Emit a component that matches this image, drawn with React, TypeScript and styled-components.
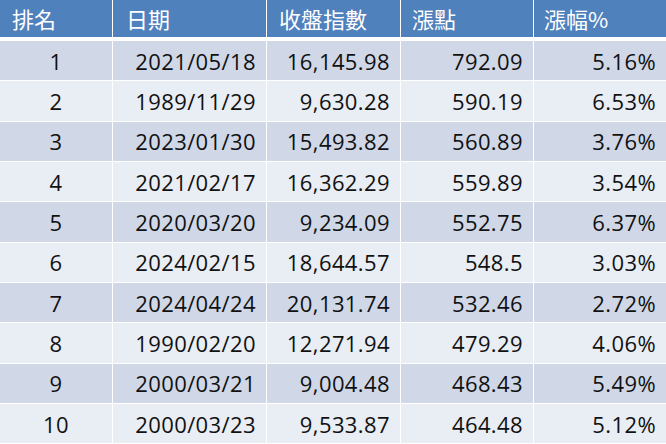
import React from 'react'
import styled, {createGlobalStyle} from 'styled-components'

const GlobalStyle = createGlobalStyle`
    html, body {
        margin: 0;
        padding: 0;
        background: #ffffff;
    }
    body {
        font-family: "Open Sans", "Noto Sans CJK TC", sans-serif;
    }
`

const COLUMNS = '112px 153px 133px 132px 1fr'

const Table = styled.div`
    width: 666px;
    height: 444px;
    overflow: hidden;
    display: flex;
    flex-direction: column;
    background: #ffffff;
`

const HeaderRow = styled.div`
    display: grid;
    grid-template-columns: ${COLUMNS};
    column-gap: 1px;
    height: 37px;
    margin-bottom: 4px;
    flex-shrink: 0;
`

const HeaderCell = styled.div<{ $pad: number }>`
    background: #4f81bd;
    color: #ffffff;
    font-family: "Noto Sans CJK TC", "Open Sans", sans-serif;
    font-size: 22px;
    line-height: 37px;
    padding-left: ${props => props.$pad}px;
    white-space: nowrap;
`

const DataRow = styled.div<{ $odd: boolean }>`
    display: grid;
    grid-template-columns: ${COLUMNS};
    column-gap: 1px;
    height: 39.33px;
    margin-bottom: 1px;
    flex-shrink: 0;
    & > div {
        background: ${props => props.$odd ? '#d0d8e8' : '#e9edf4'};
    }
`

const Cell = styled.div<{ $center?: boolean }>`
    color: #111111;
    font-family: "Open Sans", sans-serif;
    font-size: 22px;
    letter-spacing: 0.4px;
    display: flex;
    align-items: center;
    justify-content: ${props => props.$center ? 'center' : 'flex-end'};
    padding-right: ${props => props.$center ? 0 : 10}px;
    white-space: nowrap;
`

const headers = [
    {label: '排名', pad: 12},
    {label: '日期', pad: 13},
    {label: '收盤指數', pad: 12},
    {label: '漲點', pad: 11},
    {label: '漲幅%', pad: 10},
]

const rows = [
    ['1', '2021/05/18', '16,145.98', '792.09', '5.16%'],
    ['2', '1989/11/29', '9,630.28', '590.19', '6.53%'],
    ['3', '2023/01/30', '15,493.82', '560.89', '3.76%'],
    ['4', '2021/02/17', '16,362.29', '559.89', '3.54%'],
    ['5', '2020/03/20', '9,234.09', '552.75', '6.37%'],
    ['6', '2024/02/15', '18,644.57', '548.5', '3.03%'],
    ['7', '2024/04/24', '20,131.74', '532.46', '2.72%'],
    ['8', '1990/02/20', '12,271.94', '479.29', '4.06%'],
    ['9', '2000/03/21', '9,004.48', '468.43', '5.49%'],
    ['10', '2000/03/23', '9,533.87', '464.48', '5.12%'],
]

export default function App() {
    return (
        <>
            <GlobalStyle/>
            <Table>
                <HeaderRow>
                    {headers.map(h => <HeaderCell key={h.label} $pad={h.pad}>{h.label}</HeaderCell>)}
                </HeaderRow>
                {rows.map((row, i) => (
                    <DataRow key={row[0]} $odd={i % 2 === 0}>
                        {row.map((value, j) => <Cell key={j} $center={j === 0}>{value}</Cell>)}
                    </DataRow>
                ))}
            </Table>
        </>
    )
}
